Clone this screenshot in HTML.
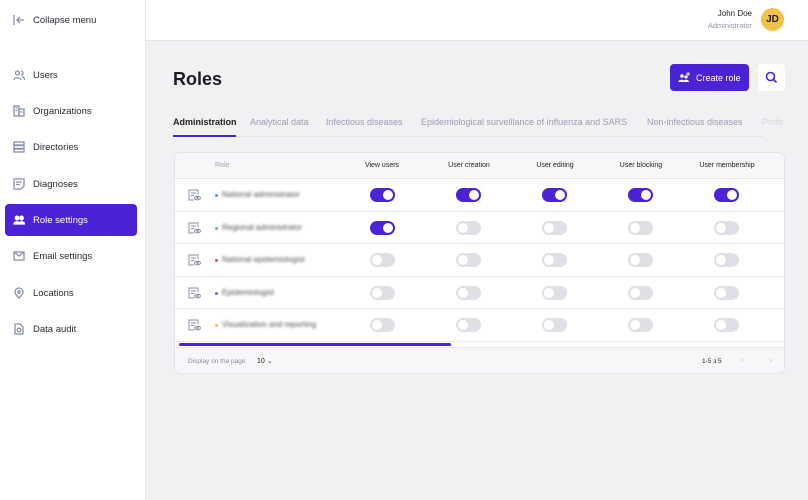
<!DOCTYPE html>
<html><head><style>
*{box-sizing:border-box;margin:0;padding:0}
body{width:808px;height:500px;overflow:hidden;font-family:"Liberation Sans",sans-serif;background:#f1f1f3;position:relative;color:#222}
.side{position:absolute;left:0;top:0;width:146px;height:500px;background:#fff;border-right:1px solid #e6e6ea}
.item{position:absolute;left:5px;width:132px;height:32px;display:flex;align-items:center;font-size:9.5px;color:#2a2a33;padding-left:8px}
.item svg{width:12px;height:12px;margin-right:8px;stroke:#8a8fa8;fill:none;stroke-width:1.3}
.item.act{background:#4b22d6;color:#fff;border-radius:4px}
.item.act svg{stroke:#fff;fill:#fff}
.hdr{position:absolute;left:146px;top:0;right:0;height:41px;background:#fff;border-bottom:1px solid #e4e4e8}
.abs{position:absolute}
.card{position:absolute;left:174px;top:152px;width:611px;height:222px;background:#fff;border:1px solid #e4e4ea;border-radius:6px;overflow:hidden}
.th{position:absolute;top:0;left:0;right:0;height:26px;background:#f7f7fa;border-bottom:1px solid #e6e6ec}
.row{position:absolute;left:0;right:0;height:32.5px;border-bottom:1px solid #ececf0}
.tg{position:absolute;width:25px;height:14px;border-radius:7px;background:#dfe0e6}
.tg::after{content:"";position:absolute;left:2px;top:2px;width:10px;height:10px;border-radius:50%;background:#fff}
.tg.on{background:#4b22d6}
.tg.on::after{left:13px}
.ch{position:absolute;font-size:7px;color:#222;top:9px;width:90px;text-align:center}
.nm{position:absolute;left:40px;font-size:8px;color:#555;filter:blur(1.3px)}
.dot{position:absolute;left:40px;width:3px;height:3px;border-radius:50%}
.ic{position:absolute;left:13px;width:13px;height:12px}
.tab{position:absolute;top:117px;font-size:9px;color:#9a9cb0}
</style></head><body>
<div class="side">
<div class="item" style="top:4px;left:5px"><svg viewBox="0 0 12 12"><path d="M1 1v10M11 6H4M7 3L4 6l3 3"/></svg>Collapse menu</div>
<div class="item" style="top:59px"><svg viewBox="0 0 12 12"><circle cx="4.5" cy="4" r="2"/><path d="M1 11c0-3 7-3 7 0M8 2a2 2 0 010 4M9 8c2 0 2.5 1.5 2.5 3"/></svg>Users</div>
<div class="item" style="top:95px"><svg viewBox="0 0 12 12"><rect x="1" y="1" width="5" height="10"/><rect x="6" y="4" width="5" height="7"/><path d="M2.5 3h2M2.5 5.5h2M7.5 7h2"/></svg>Organizations</div>
<div class="item" style="top:131px"><svg viewBox="0 0 12 12"><rect x="1" y="1" width="10" height="3"/><rect x="1" y="4.5" width="10" height="3"/><rect x="1" y="8" width="10" height="3"/></svg>Directories</div>
<div class="item" style="top:168px"><svg viewBox="0 0 12 12"><path d="M1 1h10v7l-3 3H1zM3 4h6M3 6.5h4"/></svg>Diagnoses</div>
<div class="item act" style="top:204px"><svg viewBox="0 0 12 12"><circle cx="4" cy="4" r="1.8"/><circle cx="8.5" cy="4" r="1.8"/><path d="M1 10c0-3 6-3 6 0zM6 10c0-3 5.5-3 5.5 0z"/></svg>Role settings</div>
<div class="item" style="top:240px"><svg viewBox="0 0 12 12"><rect x="1" y="2" width="10" height="8"/><path d="M1 2l5 4 5-4"/></svg>Email settings</div>
<div class="item" style="top:277px"><svg viewBox="0 0 12 12"><path d="M6 11S2 7 2 5a4 4 0 018 0c0 2-4 6-4 6z"/><circle cx="6" cy="5" r="1.2"/></svg>Locations</div>
<div class="item" style="top:313px"><svg viewBox="0 0 12 12"><path d="M2 1h5l3 3v7H2z"/><circle cx="6" cy="7" r="1.8"/></svg>Data audit</div>
</div>
<div class="hdr">
<div class="abs" style="right:56px;top:9px;font-size:8px;color:#222;text-align:right">John Doe<div style="color:#9294a8;font-size:7.5px;margin-top:3px">Administrator</div></div>
<div class="abs" style="right:24px;top:8px;width:23px;height:23px;border-radius:50%;background:#f2c24a;font-size:10px;font-weight:bold;display:flex;align-items:center;justify-content:center;color:#222">JD</div>
</div>
<div class="abs" style="left:173px;top:69px;font-size:18px;font-weight:bold;color:#1c1c24">Roles</div>
<div class="abs" style="left:670px;top:64px;width:79px;height:27px;background:#4b22d6;border-radius:4px;color:#fff;font-size:9px;display:flex;align-items:center;padding-left:8px"><svg width="13" height="11" viewBox="0 0 13 11" style="margin-right:5px" fill="#fff"><circle cx="4" cy="4" r="1.8"/><circle cx="8" cy="5" r="1.6"/><path d="M0.5 10c0-3 6-3 6 0zM5 10c0-3 6-3 6 0z"/><path d="M10 0v4M8 2h4" stroke="#fff" stroke-width="1"/></svg>Create role</div>
<div class="abs" style="left:758px;top:64px;width:27px;height:27px;background:#fff;border-radius:4px"><svg width="27" height="27" viewBox="0 0 27 27" fill="none" stroke="#4b22d6" stroke-width="1.6"><circle cx="12.5" cy="12.5" r="4"/><path d="M15.5 15.5l3 3"/></svg></div>
<div class="abs" style="left:173px;top:136px;width:590px;height:1px;background:#e4e4ea"></div>
<div class="tab" style="left:173px;color:#222;font-weight:600">Administration</div>
<div class="abs" style="left:173px;top:135px;width:63px;height:2px;background:#4b22d6"></div>
<div class="tab" style="left:250px">Analytical data</div>
<div class="tab" style="left:326px">Infectious diseases</div>
<div class="tab" style="left:421px">Epidemiological surveillance of influenza and SARS</div>
<div class="tab" style="left:647px">Non-infectious diseases</div>
<div class="tab" style="left:762px;color:#d6d7e0">Profe</div>
<div class="card">
<div class="th"><div class="abs" style="left:40px;top:9px;font-size:7px;color:#a0a2b4">Role</div>
<div class="ch" style="left:162px">View users</div><div class="ch" style="left:249px">User creation</div><div class="ch" style="left:335px">User editing</div><div class="ch" style="left:421px">User blocking</div><div class="ch" style="left:507px">User membership</div></div>
<div id="rows"></div>
<div class="abs" style="left:4px;top:190px;width:272px;height:3px;background:#4b22d6;border-radius:2px"></div>
<div class="abs" style="left:0;right:0;top:194px;height:28px;background:#f7f7fa;border-top:1px solid #ececf0"></div>
<div class="abs" style="left:13px;top:205px;font-size:6.5px;color:#888aa0">Display on the page</div>
<div class="abs" style="left:82px;top:204px;font-size:7px;color:#222">10 <span style="color:#4b22d6">&#8964;</span></div>
<div class="abs" style="left:527px;top:205px;font-size:6.5px;color:#222">1-5 з 5</div>
<div class="abs" style="left:566px;top:202px;font-size:9px;color:#c8c9d4">&#8249;</div>
<div class="abs" style="left:594px;top:202px;font-size:9px;color:#c8c9d4">&#8250;</div>
</div>
<script>
var d=[["National administrator","#3aa0e8",[1,1,1,1,1]],["Regional administrator","#3ac8a8",[1,0,0,0,0]],["National epidemiologist","#e04a8a",[0,0,0,0,0]],["Epidemiologist","#8a5ae8",[0,0,0,0,0]],["Visualization and reporting","#f0c030",[0,0,0,0,0]]];
var h="",xs=[195,281,367,453,539];
d.forEach(function(r,i){var t=26+i*32.5;h+='<div class="row" style="top:'+t+'px">';
h+='<svg class="ic" style="top:10px" viewBox="0 0 13 12" fill="none" stroke="#8a8fa8" stroke-width="1"><path d="M6 11H1V1h9v4M3 4h5M3 6.5h3"/><ellipse cx="9.5" cy="9" rx="3" ry="1.8"/><circle cx="9.5" cy="9" r=".7"/></svg>';
h+='<div class="dot" style="background:'+r[1]+';top:15px"></div><div class="nm" style="left:47px;top:11px">'+r[0]+'</div>';
r[2].forEach(function(o,j){h+='<div class="tg'+(o?' on':'')+'" style="left:'+xs[j]+'px;top:9px"></div>'});h+='</div>'});
document.getElementById("rows").innerHTML=h;
</script>
</body></html>
